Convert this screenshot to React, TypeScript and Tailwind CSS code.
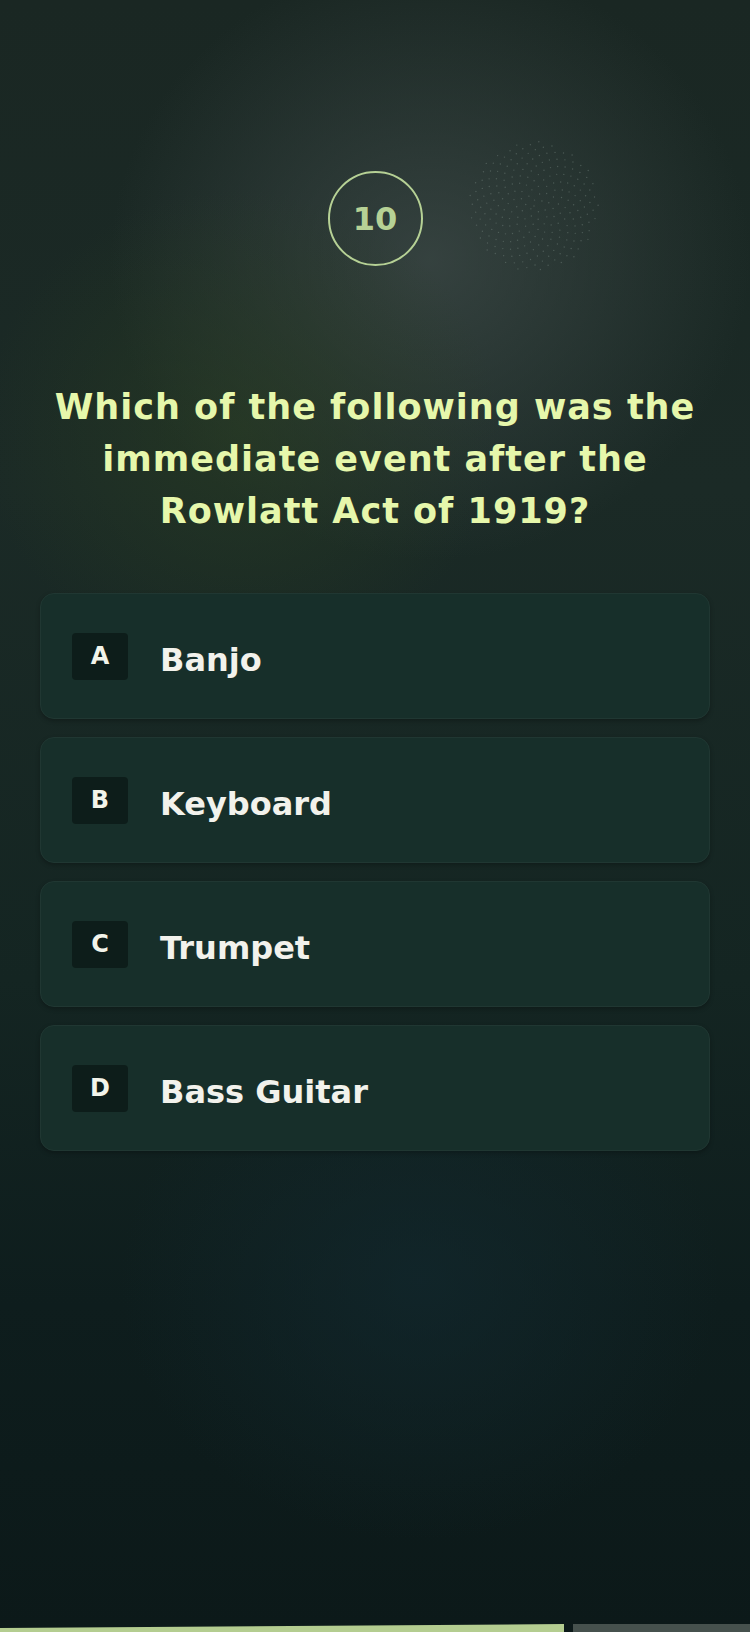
import React from "react";

const options = [
  { letter: "A", label: "Banjo" },
  { letter: "B", label: "Keyboard" },
  { letter: "C", label: "Trumpet" },
  { letter: "D", label: "Bass Guitar" },
];

// faint sunflower dot cloud behind the timer
const DotCloud = () => {
  const dots = [];
  for (let i = 0; i < 240; i++) {
    const r = 4.2 * Math.sqrt(i);
    const a = i * 2.39996;
    dots.push(
      <circle key={i} cx={70 + r * Math.cos(a)} cy={70 + r * Math.sin(a)} r={0.7} fill="#6f7f79" />
    );
  }
  return (
    <svg width="140" height="140" viewBox="0 0 140 140" className="absolute left-[464px] top-[136px] opacity-50">
      {dots}
    </svg>
  );
};

const App = () => {
  return (
    <div
      className="relative w-[750px] h-[1632px] overflow-hidden bg-[#0d1b1a]"
      style={{ fontFamily: '"DejaVu Sans", "Liberation Sans", sans-serif' }}
    >
      <div className="absolute inset-0 bg-[linear-gradient(180deg,#1a2723_0%,#1b2a26_30%,#142522_60%,#0e1d1d_80%,#0c1919_100%)]" />
      <div className="absolute inset-0 bg-[radial-gradient(ellipse_320px_300px_at_430px_260px,rgba(62,74,72,0.75),rgba(62,74,72,0)_100%)]" />
      <div className="absolute inset-0 bg-[radial-gradient(ellipse_260px_240px_at_240px_430px,rgba(42,62,34,0.6),rgba(42,62,34,0)_100%)]" />
      <div className="absolute inset-0 bg-[radial-gradient(ellipse_300px_260px_at_420px_1280px,rgba(18,40,46,0.7),rgba(18,40,46,0)_100%)]" />
      <DotCloud />

      <div className="relative flex flex-col items-center pt-[171px]">
        <div className="w-[95px] h-[95px] rounded-full border-2 border-[#b6d195] flex items-center justify-center">
          <span className="text-[32px] font-bold text-[#b6d195] leading-none">10</span>
        </div>

        <h1 className="mt-[115px] w-[700px] text-center text-[35px] leading-[52px] font-bold tracking-[1px] text-[#e6f7ab]">
          Which of the following was the immediate event after the Rowlatt Act of 1919?
        </h1>

        <div className="mt-[56px] w-[670px] flex flex-col gap-[18px]">
          {options.map((o) => (
            <div
              key={o.letter}
              className="h-[126px] rounded-[14px] bg-[#172f2a] border border-[#203732] shadow-[0_2px_4px_rgba(0,0,0,0.25)] flex items-center pl-[31px]"
            >
              <div className="w-[56px] h-[47px] rounded-[4px] bg-[#0d1d1a] flex items-center justify-center text-[24px] font-bold text-[#f2f4ea]">
                {o.letter}
              </div>
              <span className="ml-[32px] mt-[8px] text-[32px] font-bold text-[#f2f2ec]">{o.label}</span>
            </div>
          ))}
        </div>
      </div>

      <div className="absolute left-0 bottom-0 w-[750px] h-[8px] flex items-end gap-[9px]">
        <div className="w-[564px] h-[8px] bg-[#b4cd90] [clip-path:polygon(0_50%,100%_0,100%_100%,0_100%)]" />
        <div className="flex-1 h-[8px] bg-[#46514d]" />
      </div>
    </div>
  );
};

export default App;
